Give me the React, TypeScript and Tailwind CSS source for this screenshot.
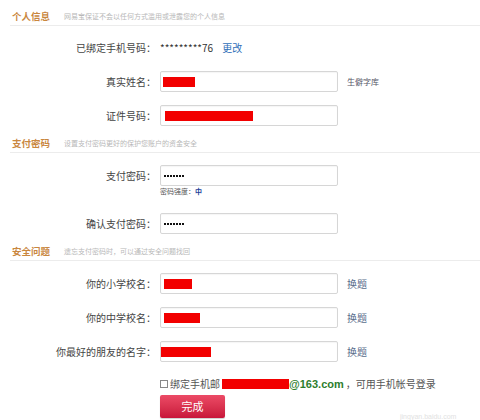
const font = { fontFamily: '"Noto Sans CJK SC", "Noto Sans", sans-serif' }

const SectionHeader = ({ title, desc, className = '' }: { title: string; desc: string; className?: string }) => (
  <div className={`ml-[10px] h-[18px] flex items-center border-b border-[#ececec] ${className}`}>
    <span className="pl-[2px] text-[9.5px] font-bold text-[#c9873f] leading-none">{title}</span>
    <span className="ml-[14px] text-[7px] text-[#b8b8b8] leading-none">{desc}</span>
  </div>
)

const Label = ({ text }: { text: string }) => (
  <div className="w-[156px] text-right text-[10px] text-[#444] leading-none shrink-0">{text}</div>
)

const Field = ({ children }: { children?: React.ReactNode }) => (
  <div className="ml-[4px] w-[178px] h-[21px] border border-[#d6d6d6] rounded-[2px] bg-white flex items-center pl-[2px] shadow-[inset_0_1px_1px_rgba(0,0,0,0.04)]">
    {children}
  </div>
)

const RedBar = ({ w, ml = 0 }: { w: number; ml?: number }) => (
  <div className="h-[10px] bg-[#f20000]" style={{ width: w, marginLeft: ml }} />
)

const Dots = () => (
  <div className="ml-[1px] flex gap-[1px]">
    {[0, 1, 2, 3, 4, 5, 6].map(i => (
      <div key={i} className="w-[2px] h-[2px] bg-[#111]" />
    ))}
  </div>
)

const Side = ({ text, small }: { text: string; small?: boolean }) => (
  <span className={`ml-[9px] leading-none ${small ? 'text-[8px] text-[#556]' : 'text-[10px] text-[#5a6e8c]'}`}>{text}</span>
)

export default function App() {
  return (
    <div className="relative w-[480px] h-[420px] bg-white overflow-hidden" style={font}>
      <div className="pt-[8px]">
        <SectionHeader title="个人信息" desc="网易宝保证不会以任何方式滥用或泄露您的个人信息" />

        <div className="mt-[12px] h-[20px] flex items-center">
          <Label text="已绑定手机号码：" />
          <span className="ml-[4px] text-[10px] text-[#333] leading-none">*********76</span>
          <span className="ml-[9px] text-[10px] text-[#2f6fb8] leading-none">更改</span>
        </div>

        <div className="mt-[13px] flex items-center">
          <Label text="真实姓名：" />
          <Field><RedBar w={32} /></Field>
          <Side text="生僻字库" small />
        </div>

        <div className="mt-[13px] flex items-center">
          <Label text="证件号码：" />
          <Field><RedBar w={88} ml={2} /></Field>
        </div>

        <SectionHeader title="支付密码" desc="设置支付密码更好的保护您账户的资金安全" className="mt-[9px]" />

        <div className="mt-[12px] flex items-center">
          <Label text="支付密码：" />
          <Field><Dots /></Field>
        </div>
        <div className="h-[10px] pl-[160px] flex items-center text-[7px] leading-none text-[#555]">
          密码强度：<span className="font-bold text-[#1f3f9a]">中</span>
        </div>

        <div className="mt-[17px] flex items-center">
          <Label text="确认支付密码：" />
          <Field><Dots /></Field>
        </div>

        <SectionHeader title="安全问题" desc="遗忘支付密码时，可以通过安全问题找回" className="mt-[9px]" />

        <div className="mt-[12px] flex items-center">
          <Label text="你的小学校名：" />
          <Field><RedBar w={28} ml={1} /></Field>
          <Side text="换题" />
        </div>

        <div className="mt-[13px] flex items-center">
          <Label text="你的中学校名：" />
          <Field><RedBar w={36} ml={1} /></Field>
          <Side text="换题" />
        </div>

        <div className="mt-[13px] flex items-center">
          <Label text="你最好的朋友的名字：" />
          <Field><RedBar w={50} ml={-2} /></Field>
          <Side text="换题" />
        </div>

        <div className="mt-[16px] h-[12px] pl-[160px] flex items-center text-[10px] leading-none text-[#555]">
          <div className="w-[8px] h-[8px] border border-[#888] bg-white" />
          <span className="ml-[2px]">绑定手机邮</span>
          <div className="ml-[2px] w-[67px] h-[10px] bg-[#f20000]" />
          <span className="font-bold text-[11px] text-[#2d7d2d]" style={{ fontFamily: '"Liberation Sans", sans-serif' }}>@163.com</span>
          <span className="ml-[2px]">，可用手机帐号登录</span>
        </div>

        <div className="mt-[5px] ml-[160px] w-[65px] h-[23px] rounded-[2px] bg-gradient-to-b from-[#ec4a66] to-[#c8143a] flex items-center justify-center text-white text-[11px] leading-none shadow-[0_1px_1px_rgba(0,0,0,0.2)]">
          完成
        </div>
      </div>

      <div className="absolute left-[400px] top-[400px] pointer-events-none">
        <span className="text-[7px] text-[#e2e2e2] leading-none" style={{ fontFamily: '"Liberation Sans", sans-serif' }}>jingyan.baidu.com</span>
      </div>
    </div>
  )
}
